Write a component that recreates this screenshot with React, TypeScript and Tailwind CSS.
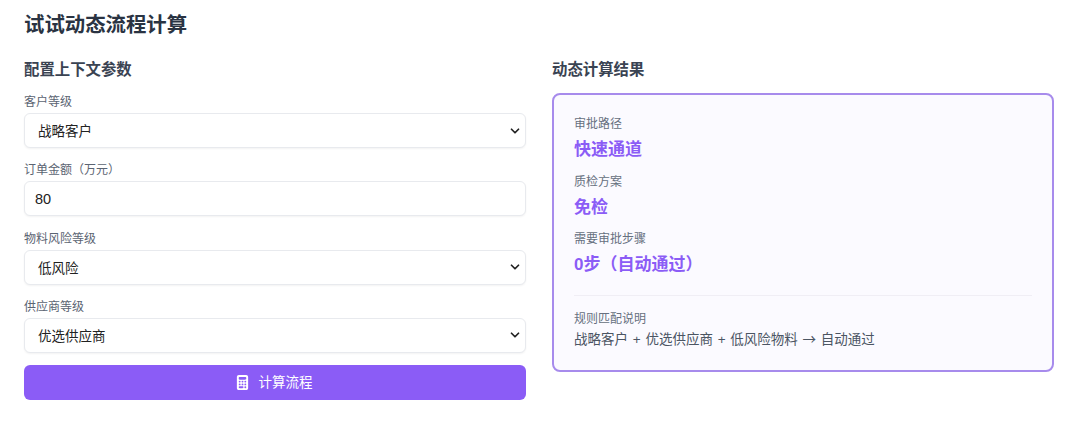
import { ChevronDown } from "lucide-react";
import { FaCalculator } from "react-icons/fa6";

const font = "font-['Liberation_Sans','Noto_Sans_CJK_SC',sans-serif]";

const SelectField = ({ label, value }: { label: string; value: string }) => (
	<div className="mb-[13.33px]">
		<div className="mb-[2px] h-[18px] text-[12px] leading-[18px] text-[#5b6472]">{label}</div>
		<div className="flex h-[35px] items-center justify-between rounded-[6px] border border-[#e8eaee] bg-white pl-[13px] pr-[3px] text-[13.5px] text-[#222] shadow-[0_1px_2px_rgba(0,0,0,0.05)]">
			<span className="pt-[3px]">{value}</span>
			<ChevronDown size={14} strokeWidth={3} className="text-[#222]" />
		</div>
	</div>
);

const ResultItem = ({ label, value }: { label: string; value: string }) => (
	<div className="mb-[10.5px]">
		<div className="mb-[5px] h-[18px] text-[12px] leading-[18px] text-[#667080]">{label}</div>
		<div className="h-[24px] text-[17px] font-bold leading-[24px] text-[#8b5cf6]">{value}</div>
	</div>
);

export default function App() {
	return (
		<div className={`${font} h-[423px] w-[1080px] overflow-hidden bg-white px-[24px] pt-[11px]`}>
			<h1 className="h-[28px] text-[20.4px] font-bold leading-[28px] text-[#2a3342]">试试动态流程计算</h1>
			<div className="mt-[20px] grid grid-cols-[502px_502px] gap-x-[26px]">
				<div>
					<h2 className="mb-[12px] h-[22px] text-[15.4px] font-bold leading-[22px] text-[#3a4352]">配置上下文参数</h2>
					<SelectField label="客户等级" value="战略客户" />
					<div className="mb-[13.33px]">
						<div className="mb-[2px] h-[18px] text-[12px] leading-[18px] text-[#5b6472]">订单金额（万元）</div>
						<div className="flex h-[35px] items-center rounded-[6px] border border-[#e8eaee] bg-white pl-[10px] pt-[2px] text-[14.5px] text-[#222] shadow-[0_1px_2px_rgba(0,0,0,0.05)]">
							80
						</div>
					</div>
					<SelectField label="物料风险等级" value="低风险" />
					<SelectField label="供应商等级" value="优选供应商" />
					<button className="-mt-[1px] flex h-[35px] w-full items-center justify-center gap-[9px] rounded-[6px] bg-[#8b5cf6] pr-[3px] text-[13.5px] text-white">
						<FaCalculator size={15} />
						计算流程
					</button>
				</div>
				<div>
					<h2 className="mb-[12px] h-[22px] text-[15.4px] font-bold leading-[22px] text-[#3a4352]">动态计算结果</h2>
					<div className="h-[279px] rounded-[8px] border-2 border-[#a78bec] bg-[#fbfaff] px-[20px] pt-[20px]">
						<ResultItem label="审批路径" value="快速通道" />
						<ResultItem label="质检方案" value="免检" />
						<ResultItem label="需要审批步骤" value="0步（自动通过）" />
						<div className="mt-[17.5px] border-t border-[#f0eef5] pt-[14px]">
							<div className="h-[18px] text-[12px] leading-[18px] text-[#667080]">规则匹配说明</div>
							<div className="text-[13.5px] leading-[20px] text-[#4b5563] [word-spacing:1px]">
								战略客户 + 优选供应商 + 低风险物料 <span className="font-['Noto_Sans_CJK_SC',sans-serif]">→</span> 自动通过
							</div>
						</div>
					</div>
				</div>
			</div>
		</div>
	);
}
